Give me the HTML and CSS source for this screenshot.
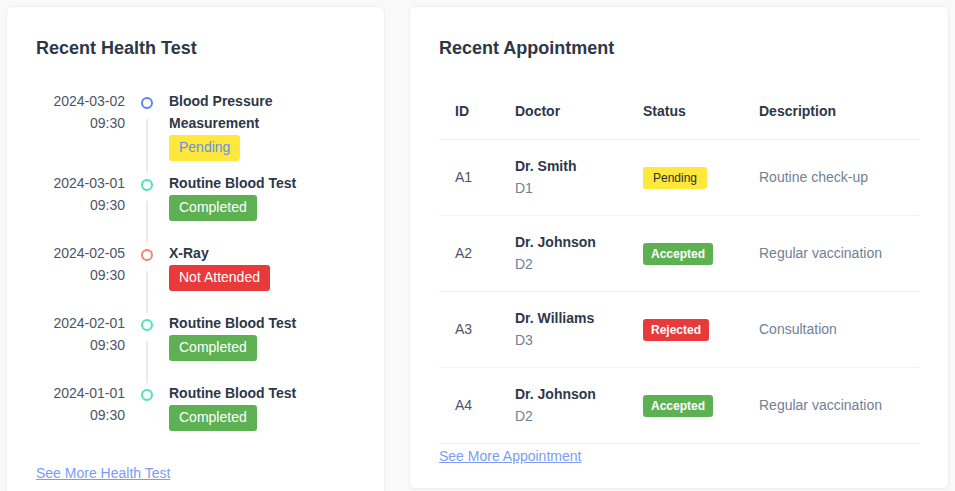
FILE: index.html
```html
<!DOCTYPE html>
<html lang="en">
<head>
<meta charset="utf-8">
<title>Dashboard</title>
<link rel="stylesheet" href="styles.css">
</head>
<body>
<div class="page">
  <section class="card card-tests">
    <h2 class="card-title">Recent Health Test</h2>
    <ul class="timeline">
      <li class="tl-item">
        <div class="tl-date">2024-03-02<br>09:30</div>
        <div class="tl-axis"><span class="tl-dot dot-blue"></span><span class="tl-line"></span></div>
        <div class="tl-content">
          <div class="tl-title">Blood Pressure Measurement</div>
          <span class="badge badge-pending">Pending</span>
        </div>
      </li>
      <li class="tl-item">
        <div class="tl-date">2024-03-01<br>09:30</div>
        <div class="tl-axis"><span class="tl-dot dot-teal"></span><span class="tl-line"></span></div>
        <div class="tl-content">
          <div class="tl-title">Routine Blood Test</div>
          <span class="badge badge-green">Completed</span>
        </div>
      </li>
      <li class="tl-item">
        <div class="tl-date">2024-02-05<br>09:30</div>
        <div class="tl-axis"><span class="tl-dot dot-orange"></span><span class="tl-line"></span></div>
        <div class="tl-content">
          <div class="tl-title">X-Ray</div>
          <span class="badge badge-red">Not Attended</span>
        </div>
      </li>
      <li class="tl-item">
        <div class="tl-date">2024-02-01<br>09:30</div>
        <div class="tl-axis"><span class="tl-dot dot-teal"></span><span class="tl-line"></span></div>
        <div class="tl-content">
          <div class="tl-title">Routine Blood Test</div>
          <span class="badge badge-green">Completed</span>
        </div>
      </li>
      <li class="tl-item">
        <div class="tl-date">2024-01-01<br>09:30</div>
        <div class="tl-axis"><span class="tl-dot dot-teal"></span></div>
        <div class="tl-content">
          <div class="tl-title">Routine Blood Test</div>
          <span class="badge badge-green">Completed</span>
        </div>
      </li>
    </ul>
    <a class="more-link" href="#">See More Health Test</a>
  </section>

  <section class="card card-appts">
    <h2 class="card-title">Recent Appointment</h2>
    <table class="appt-table">
      <thead>
        <tr>
          <th class="col-id">ID</th>
          <th class="col-doc">Doctor</th>
          <th class="col-status">Status</th>
          <th class="col-desc">Description</th>
        </tr>
      </thead>
      <tbody>
        <tr>
          <td class="cell-id">A1</td>
          <td><div class="doc-name">Dr. Smith</div><div class="doc-id">D1</div></td>
          <td><span class="tag tag-pending">Pending</span></td>
          <td class="cell-desc">Routine check-up</td>
        </tr>
        <tr>
          <td class="cell-id">A2</td>
          <td><div class="doc-name">Dr. Johnson</div><div class="doc-id">D2</div></td>
          <td><span class="tag tag-green">Accepted</span></td>
          <td class="cell-desc">Regular vaccination</td>
        </tr>
        <tr>
          <td class="cell-id">A3</td>
          <td><div class="doc-name">Dr. Williams</div><div class="doc-id">D3</div></td>
          <td><span class="tag tag-red">Rejected</span></td>
          <td class="cell-desc">Consultation</td>
        </tr>
        <tr>
          <td class="cell-id">A4</td>
          <td><div class="doc-name">Dr. Johnson</div><div class="doc-id">D2</div></td>
          <td><span class="tag tag-green">Accepted</span></td>
          <td class="cell-desc">Regular vaccination</td>
        </tr>
      </tbody>
    </table>
    <a class="more-link" href="#">See More Appointment</a>
  </section>
</div>
</body>
</html>
```
FILE: styles.css
```css
* { box-sizing: border-box; }

html, body {
  margin: 0;
  padding: 0;
  background: #f9f9f9;
  font-family: "Liberation Sans", Arial, sans-serif;
  font-size: 14px;
  color: #2d3748;
}

.page {
  display: flex;
  align-items: flex-start;
  gap: 24px;
  padding: 6px;
}

.card {
  background: #ffffff;
  border: 1px solid #f0f0f0;
  border-radius: 6px;
  box-shadow: 0 1px 3px rgba(0, 0, 0, 0.03);
  padding: 29px 29px 21px;
}

.card-tests { width: 379px; padding-bottom: 30px; }
.card-appts { width: 540px; }

.card-title {
  margin: 0;
  font-size: 18px;
  line-height: 24px;
  font-weight: 700;
  color: #2d3748;
}

/* Timeline */
.timeline {
  list-style: none;
  margin: 30px 0 0;
  padding: 0;
}

.tl-item {
  display: grid;
  grid-template-columns: 89px 22px 1fr;
  column-gap: 11px;
  min-height: 70px;
  padding-bottom: 11px;
}

.tl-date {
  text-align: right;
  line-height: 22px;
  color: #4a5568;
}

.tl-axis {
  display: flex;
  flex-direction: column;
  align-items: center;
  padding-top: 7px;
  margin-bottom: -26px;
}

.tl-dot {
  width: 12px;
  height: 12px;
  border-radius: 50%;
  border: 2px solid #5b82f7;
  background: #fff;
  flex: none;
}
.dot-blue { border-color: #5b82f7; }
.dot-teal { border-color: #4fe1b8; }
.dot-orange { border-color: #f1866a; }

.tl-line {
  flex: 1;
  width: 2px;
  background: #ebebeb;
  margin: 10px 0 14px;
}

.tl-content {
  max-width: 160px;
}

.tl-title {
  font-weight: 700;
  line-height: 22px;
  color: #2d3748;
}

.badge {
  display: inline-block;
  margin-top: 1px;
  padding: 0 10px;
  height: 26px;
  line-height: 25px;
  border-radius: 3px;
  font-size: 14px;
}
.badge-pending { background: #fde83b; color: #6a8cf2; }
.badge-green { background: #5db152; color: #ffffff; }
.badge-red { background: #e8393b; color: #ffffff; }

.more-link {
  display: inline-block;
  color: #7b9cf6;
  line-height: 22px;
  text-decoration: underline;
}
.card-tests .more-link { margin-top: 10px; }
.card-appts .more-link { margin-top: 1px; }

/* Table */
.appt-table {
  width: 480px;
  margin-top: 22px;
  border-collapse: collapse;
  table-layout: fixed;
}

.col-id { width: 60px; }
.col-doc { width: 128px; }
.col-status { width: 116px; }
.col-desc { width: 176px; }

.appt-table th {
  text-align: left;
  font-weight: 700;
  line-height: 22px;
  padding: 18px 16px 17px;
  color: #2d3748;
  border-bottom: 1px solid #f3f3f3;
}

.appt-table td {
  line-height: 22px;
  padding: 15px 16px 16px;
  vertical-align: middle;
  border-bottom: 1px solid #f3f3f3;
  white-space: nowrap;
}

.cell-id { color: #4a5568; }
.cell-desc { color: #718096; }

.doc-name { font-weight: 700; color: #2d3748; }
.doc-id { color: #718096; }

.tag {
  display: inline-block;
  height: 22px;
  line-height: 22px;
  padding: 0 8px;
  border-radius: 3px;
  font-size: 12px;
  font-weight: 700;
}
.tag-pending { background: #fde83b; color: #2d2d2d; font-weight: 400; padding: 0 10px; }
.tag-green { background: #5db152; color: #ffffff; }
.tag-red { background: #e8393b; color: #ffffff; }
```
